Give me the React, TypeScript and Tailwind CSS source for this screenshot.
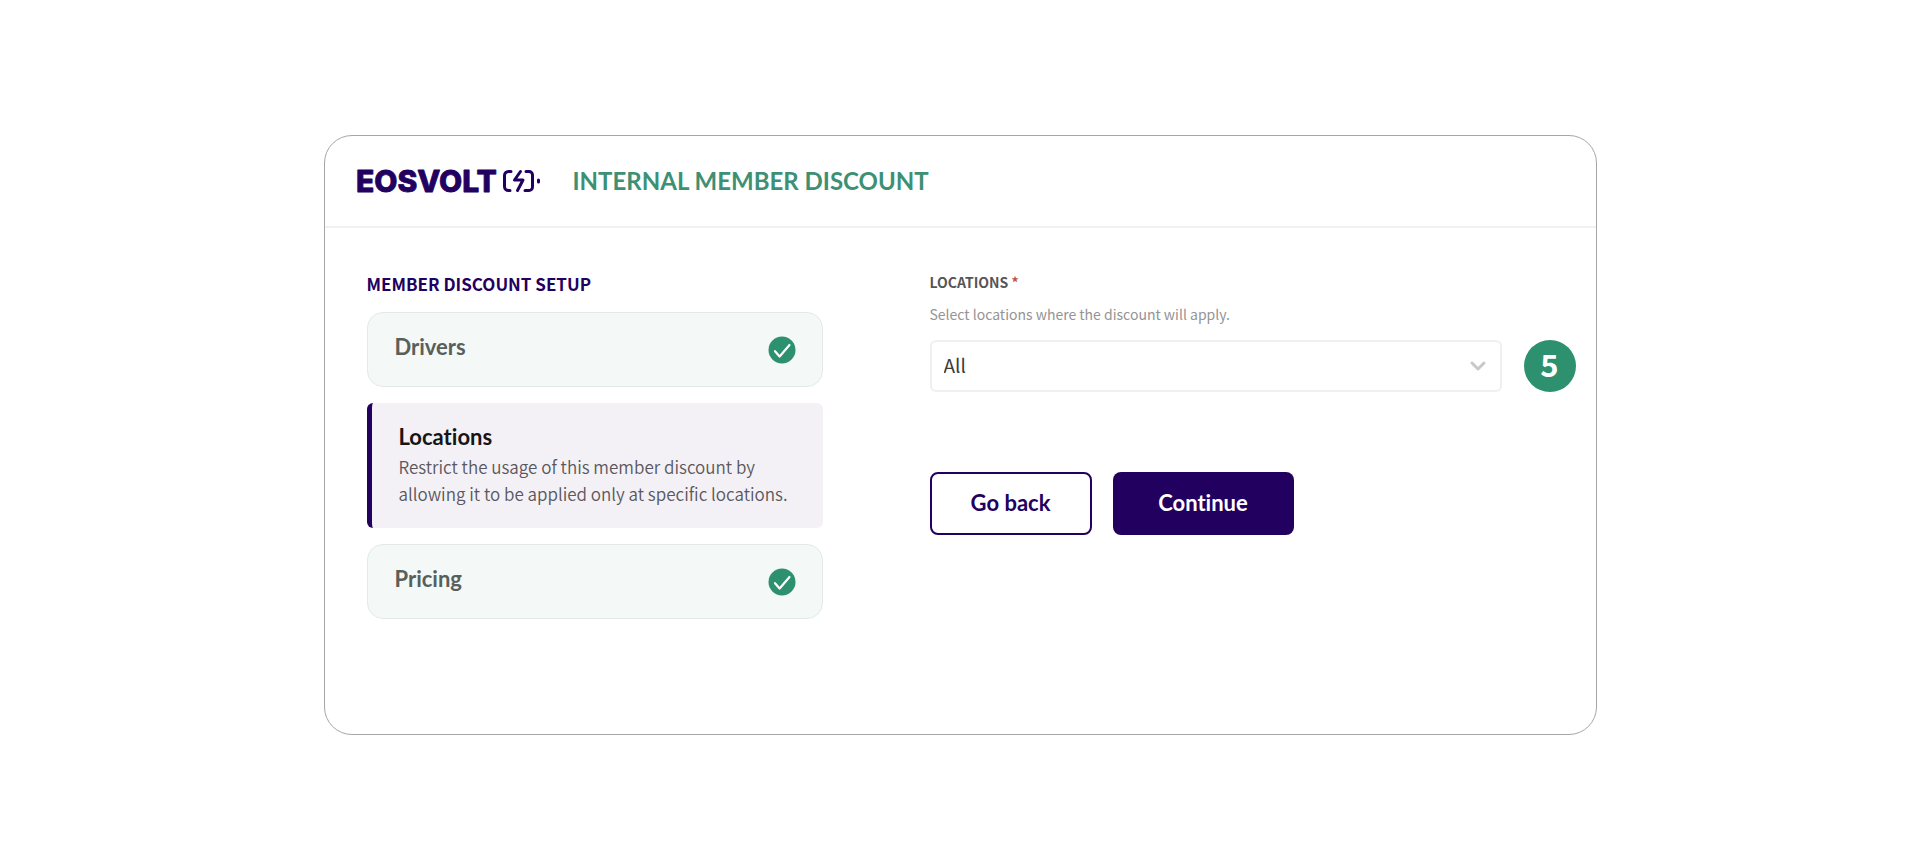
import React from 'react';
import { ChevronDown } from 'lucide-react';

interface StepProps {
  title: string;
}

function Logo() {
  return (
    <svg width="186" height="30" viewBox="0 0 186 30" role="img" aria-label="Eosvolt" className="overflow-visible">
      <text
        x="-1"
        y="26"
        fontSize="30"
        fontWeight="800"
        fill="#22005f"
        stroke="#22005f"
        strokeWidth="0.8"
        strokeLinejoin="round"
        className="font-['Inter',sans-serif]"
      >
        EOSVOLT
      </text>
      {/* Battery */}
      <g fill="none" stroke="#22005f" strokeWidth="3" strokeLinecap="round" strokeLinejoin="round">
        <path d="M154 5.500h-2.500a4 4 0 0 0-4 4v11a4 4 0 0 0 4 4h1.500" />
        <path d="M169 5.500h3a3.500 3.500 0 0 1 3.500 3.500v12a3.500 3.500 0 0 1-3.500 3.500h-4" />
        <path d="M163.500 5.500l-6 8.500h8.500l-5.500 10.500" />
        <path d="M181.500 14v2" />
      </g>
    </svg>
  );
}

function CheckBadge() {
  return (
    <svg width="28" height="28" viewBox="0 0 28 28" aria-hidden="true" className="mt-0.5">
      <circle cx="14" cy="14" r="13.500" fill="#2d916f" />
      <path d="M7 15.200l4.600 5.300L21.500 9" fill="none" stroke="#fff" strokeWidth="2.200" strokeLinecap="round" strokeLinejoin="round" />
    </svg>
  );
}

function CompletedStep({ title }: StepProps) {
  return (
    <li className="flex h-[75px] items-center justify-between rounded-2xl border border-[#e2eae7] bg-[#f4f8f7] pr-[26px] pl-[27px]">
      <h3 className="pb-1 text-[22px] leading-7 font-bold text-[#58605c]">{title}</h3>
      <CheckBadge />
    </li>
  );
}

export default function App() {
  return (
    <div className="flex min-h-screen items-center justify-center bg-white pt-0.5 font-['Lato',sans-serif] [font-variant-ligatures:none]">
      <main className="w-full max-w-[1273px] rounded-[28px] border border-[#a6a6a6] bg-white">
        {/* Header */}
        <header className="flex items-center gap-[30px] border-b-2 border-[#f1f1f1] px-8 py-[29px]">
          <Logo />
          <h1 className="text-[24px] leading-8 font-bold text-[#3d9074]">INTERNAL MEMBER DISCOUNT</h1>
        </header>

        <div className="flex gap-[107px] pt-11 pr-5 pb-[115px] pl-[42px]">
          {/* Steps */}
          <section className="w-[456px] shrink-0">
            <h2 className="mb-4 font-['Noto_Sans_CJK_SC',sans-serif] text-[17px] leading-6 font-bold text-[#22005f]">
              MEMBER DISCOUNT SETUP
            </h2>
            <ul className="flex flex-col gap-4">
              <CompletedStep title="Drivers" />
              <li className="rounded-md border-l-[5px] border-[#22005f] bg-[#f4f1f6] pt-5 pr-5 pb-[21px] pl-[27px]">
                <h3 className="mb-0.5 text-[22px] leading-7 font-bold text-[#161616]">Locations</h3>
                <p className="font-['Noto_Sans_CJK_SC',sans-serif] text-[17px] leading-[27px] font-[350] text-[#5a585e]">
                  Restrict the usage of this member discount by allowing it to be applied only at specific locations.
                </p>
              </li>
              <CompletedStep title="Pricing" />
            </ul>
          </section>

          {/* Form */}
          <form className="flex-1" onSubmit={(e) => e.preventDefault()}>
            <label
              htmlFor="locations"
              className="block font-['Noto_Sans_CJK_SC',sans-serif] text-[14px] leading-5 font-bold text-[#555]"
            >
              LOCATIONS <span className="text-[#c0504d]">*</span>
            </label>
            <p id="locations-help" className="mt-3 font-['Noto_Sans_CJK_SC',sans-serif] text-[14px] leading-5 text-[#949494]">
              Select locations where the discount will apply.
            </p>
            <div className="mt-4 flex items-center gap-[22px]">
              <div className="relative flex-1">
                <select
                  id="locations"
                  aria-describedby="locations-help"
                  className="h-[52px] w-full appearance-none rounded-md border-2 border-[#f0f0f0] bg-white px-3 font-['Noto_Sans_CJK_SC',sans-serif] text-[19px] text-[#3c3c3c]"
                >
                  <option>All</option>
                </select>
                <ChevronDown className="pointer-events-none absolute top-[14px] right-3 size-6 text-[#c8c8c8]" strokeWidth={3} />
              </div>
              <span className="flex size-[52px] items-center justify-center rounded-full bg-[#2d916f] pb-1 font-['Noto_Sans_CJK_SC',sans-serif] text-[31px] leading-none font-bold text-white">
                5
              </span>
            </div>
            <div className="mt-20 flex gap-[21px]">
              <button
                type="button"
                className="h-[63px] w-[162px] rounded-lg border-2 border-[#22005f] bg-white pb-0.5 text-[22px] font-bold text-[#22005f]"
              >
                Go back
              </button>
              <button type="submit" className="h-[63px] w-[181px] rounded-lg bg-[#22005f] pb-0.5 text-[22px] font-bold text-white">
                Continue
              </button>
            </div>
          </form>
        </div>
      </main>
    </div>
  );
}
